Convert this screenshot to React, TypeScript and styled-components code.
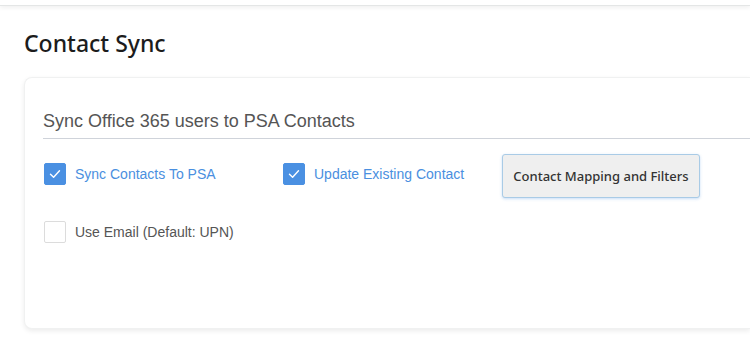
import React from "react";
import styled, { createGlobalStyle } from "styled-components";

const Global = createGlobalStyle`
  html, body { margin: 0; padding: 0; background: #ffffff; }
  body { font-family: "Liberation Sans", Arial, sans-serif; overflow: hidden; }
`;

const Page = styled.div`
  width: 750px;
  height: 342px;
  overflow: hidden;
  background: #ffffff;
`;

const TopBar = styled.div`
  height: 5px;
  background: #ffffff;
  border-bottom: 1px solid #e4e6e6;
  box-shadow: 0 2px 4px rgba(0, 0, 0, 0.06);
`;

const Content = styled.div`
  padding: 24px 0 0 24px;
`;

const Title = styled.h1`
  margin: 0;
  font-family: "Noto Sans", sans-serif;
  font-size: 23px;
  font-weight: 500;
  line-height: 26px;
  color: #1c1c1c;
`;

const Card = styled.section`
  margin-top: 21px;
  height: 252px;
  box-sizing: border-box;
  background: #ffffff;
  border: 1px solid #f0f1f1;
  border-right: none;
  border-radius: 8px 0 0 8px;
  box-shadow: 0 2px 5px rgba(0, 0, 0, 0.08);
  padding: 29px 0 0 18px;
`;

const Legend = styled.div`
  font-size: 18px;
  line-height: 28px;
  color: #555555;
  padding-bottom: 3px;
  border-bottom: 1px solid #cfd3da;
`;

const Row = styled.div<{ $top: number }>`
  display: flex;
  align-items: center;
  margin-top: ${(p) => p.$top}px;
  margin-left: 1px;
`;

const Option = styled.label<{ $width?: number }>`
  display: flex;
  align-items: center;
  gap: 9px;
  width: ${(p) => (p.$width ? `${p.$width}px` : "auto")};
  font-size: 14px;
  cursor: pointer;
`;

const Box = styled.span<{ $checked: boolean }>`
  width: 22px;
  height: 22px;
  box-sizing: border-box;
  border-radius: 2px;
  display: flex;
  align-items: center;
  justify-content: center;
  background: ${(p) => (p.$checked ? "#4a90e2" : "#ffffff")};
  border: 1px solid ${(p) => (p.$checked ? "#4a90e2" : "#dcdcdc")};
`;

const Label = styled.span<{ $checked: boolean }>`
  color: ${(p) => (p.$checked ? "#4a8fe0" : "#555555")};
`;

const Button = styled.button`
  height: 44px;
  width: 198px;
  box-sizing: border-box;
  background: #efefef;
  border: 1px solid #a9cbe6;
  border-radius: 3px;
  box-shadow: 0 1px 3px rgba(74, 144, 226, 0.3);
  font-family: "Noto Sans", sans-serif;
  font-size: 13px;
  font-weight: 500;
  color: #333333;
  padding: 0;
  margin-top: 5px;
`;

const Check = () => (
  <svg width="14" height="14" viewBox="0 0 14 14">
    <path d="M2.5 7.2 L5.6 10.2 L11.5 3.8" fill="none" stroke="#ffffff" strokeWidth="1.4" strokeLinecap="round" strokeLinejoin="round" />
  </svg>
);

const CheckOption = ({ checked, label, width }: { checked: boolean; label: string; width?: number }) => (
  <Option $width={width}>
    <Box $checked={checked}>{checked && <Check />}</Box>
    <Label $checked={checked}>{label}</Label>
  </Option>
);

export default function App() {
  return (
    <Page>
      <Global />
      <TopBar />
      <Content>
        <Title>Contact Sync</Title>
        <Card>
          <Legend>Sync Office 365 users to PSA Contacts</Legend>
          <Row $top={10}>
            <CheckOption checked label="Sync Contacts To PSA" width={239} />
            <CheckOption checked label="Update Existing Contact" width={219} />
            <Button>Contact Mapping and Filters</Button>
          </Row>
          <Row $top={23}>
            <CheckOption checked={false} label="Use Email (Default: UPN)" />
          </Row>
        </Card>
      </Content>
    </Page>
  );
}
